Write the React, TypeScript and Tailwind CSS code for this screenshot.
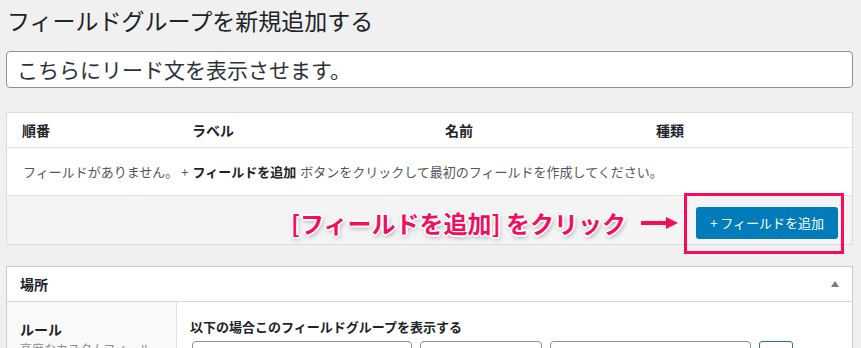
import React from "react"

const JP = "font-['Noto_Sans_CJK_JP','Noto_Sans',sans-serif]"

const COLUMNS = ["順番", "ラベル", "名前", "種類"]

const Arrow = () => (
  <svg width="38" height="14" viewBox="0 0 38 14" className="block">
    <path d="M1 7 H28" stroke="#f50d5d" strokeWidth="4" strokeLinecap="round" />
    <path d="M25 1 L37 7 L25 13 Z" fill="#f50d5d" />
  </svg>
)

const FieldsPanel = () => (
  <div className="relative mt-6 border border-[#dcdcde] bg-white">
    <div className="grid h-[35px] grid-cols-[170px_253px_211px_1fr] items-center border-b border-[#e2e2e4] px-[15px] text-[14px] font-bold text-[#1d2327]">
      {COLUMNS.map((c) => (
        <div key={c}>{c}</div>
      ))}
    </div>
    <div className="flex h-[48px] items-center border-b border-[#e2e2e4] px-4 text-[13px] text-[#50575e]">
      フィールドがありません。 + <b className="mx-1 font-bold text-[#1d2327]">フィールドを追加</b> ボタンをクリックして最初のフィールドを作成してください。
    </div>
    <div className="flex h-[48px] items-start justify-end bg-[#f4f4f5] pr-[14px] pt-2">
      <div className="flex items-center">
        <span className="mr-[15px] mt-[1px] text-[24px] font-bold text-[#f50d5d] [text-shadow:0_0_2px_#fff,1px_1px_0_#fff,-1px_-1px_0_#fff,1px_-1px_0_#fff,-1px_1px_0_#fff,2px_0_0_#fff,-2px_0_0_#fff,0_2px_0_#fff,0_-2px_0_#fff,1px_2px_5px_rgba(0,0,0,0.45)]">
          [フィールドを追加] をクリック
        </span>
        <Arrow />
        <button className="ml-[17px] h-8 rounded-[3px] bg-[#007cba] px-[14px] text-[13px] text-white">
          + フィールドを追加
        </button>
      </div>
    </div>
    <div className="pointer-events-none absolute left-[677px] top-[80px] h-[61px] w-[160px] border-[3px] border-[#fb0a5b]" />
  </div>
)

const LocationPanel = () => (
  <div className="mt-[21px] border border-[#c9cacd] bg-white">
    <div className="flex h-[35px] items-center justify-between border-b border-[#d4d5d8] pl-[13px] pr-[13px]">
      <span className="text-[14px] font-bold text-[#1d2327]">場所</span>
      <span className="h-0 w-0 border-x-[4px] border-b-[6px] border-x-transparent border-b-[#787c82]" />
    </div>
    <div className="flex">
      <div className="w-[170px] shrink-0 border-r border-[#e2e2e4] bg-[#f9f9f9] px-[13px] pt-[17px]">
        <div className="text-[14px] font-bold text-[#1d2327]">ルール</div>
        <div className="text-[12px] leading-[18px] text-[#8c8f94]">高度なカスタムフィールド</div>
      </div>
      <div className="flex-1 pl-[13px] pt-[15px]">
        <div className="text-[13px] font-bold text-[#1d2327]">以下の場合このフィールドグループを表示する</div>
        <div className="mt-[4px] flex gap-2 pl-[2px]">
          <div className="h-[30px] w-[220px] rounded-[4px] border border-[#8c8f94]" />
          <div className="h-[30px] w-[122px] rounded-[4px] border border-[#8c8f94]" />
          <div className="h-[30px] w-[201px] rounded-[4px] border border-[#8c8f94]" />
          <div className="h-[30px] w-[34px] rounded-[3px] border border-[#2271b1]" />
        </div>
      </div>
    </div>
  </div>
)

export default function App() {
  return (
    <div className={`h-[348px] w-[861px] overflow-hidden bg-[#f0f0f1] pl-[6px] pr-[8px] ${JP}`}>
      <h1 className="pl-[1px] pt-[5px] text-[23px] font-normal leading-[30px] text-[#1d2327]">
        フィールドグループを新規追加する
      </h1>
      <div className="mt-4 flex h-[37px] items-center rounded-[4px] border border-[#8c8f94] bg-white pl-[10px] text-[21px] text-[#2c3338]">
        こちらにリード文を表示させます。
      </div>
      <FieldsPanel />
      <LocationPanel />
    </div>
  )
}
